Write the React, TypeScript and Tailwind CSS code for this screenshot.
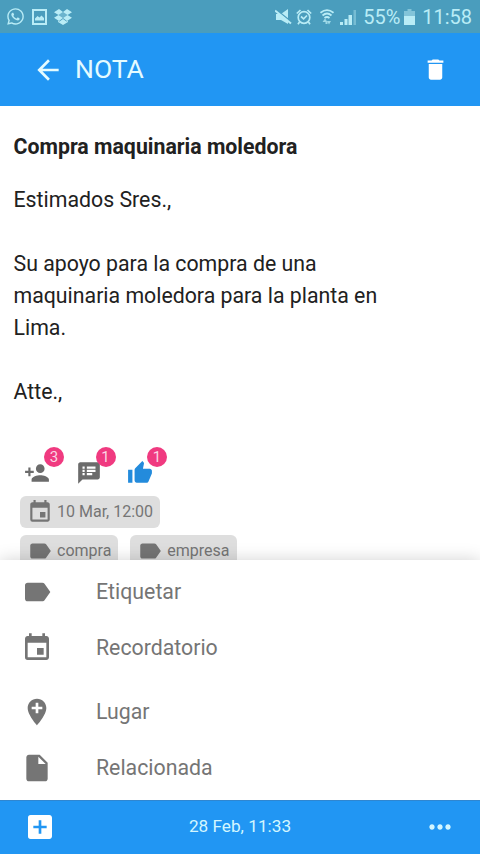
import type { ReactNode } from "react";
import type { IconType } from "react-icons";
import { FaWhatsapp } from "react-icons/fa";
import {
   MdAddBox,
   MdAddLocation,
   MdArrowBack,
   MdDelete,
   MdEvent,
   MdInsertDriveFile,
   MdLabel,
   MdMoreHoriz,
   MdPersonAdd,
   MdSpeakerNotes,
   MdThumbUp,
} from "react-icons/md";

function StatusBar()
{
   return (
      <div className="flex h-[33px] shrink-0 items-center bg-[#4a9dbd] pl-[6px] pr-2 text-[#b9ecf6]">
         <FaWhatsapp className="size-[19px]" />
         <svg className="ml-[7px] h-4 w-[15px]" viewBox="0 0 15 16" fill="none" stroke="currentColor" strokeWidth="2">
            <rect x="1" y="1" width="13" height="14" />
            <path d="M3 11.500V9.500L5.500 7L7.500 8.500L9.500 6.500L12 9V11.500Z" fill="currentColor" stroke="none" />
         </svg>
         {/* dropbox */}
         <svg className="ml-[7px] h-4 w-[18px]" viewBox="0 0 18 16" fill="currentColor">
            <path d="M5 0L9 3L4.500 6L0 3.200ZM13 0L18 3.200L13.500 6L9 3ZM0 8.800L4.500 6L9 9L5 12ZM18 8.800L13.500 6L9 9L13 12Z" />
            <path d="M4 12L5.500 12.600L9 10L12.500 12.600L14 12V13L9 16L4 13Z" />
            <path d="M4.500 6L9 3L13.500 6L9 9Z" opacity=".3" />
         </svg>
         <div className="ml-auto flex items-center">
            {/* muted speaker */}
            <svg className="h-4 w-[17px]" viewBox="0 0 17 16" fill="currentColor">
               <path d="M1 5H6L13 0V15L6 11H1Z" />
               <path d="M1 0.500L16 12.500" stroke="#4a9dbd" strokeWidth="1.5" />
               <path d="M0 1.500L16 14.500" stroke="currentColor" strokeWidth="2" />
            </svg>
            <svg className="ml-1 h-4 w-4" viewBox="0 0 16 16" fill="none" stroke="currentColor" strokeWidth="1.7">
               <circle cx="8" cy="8.5" r="5.8" />
               <path d="M5 7.500L7.600 9.800L11 6.500M0.800 4.500L4.500 1M15.200 4.500L11.500 1M3.500 13L2 15.200M12.500 13L14 15.200" />
            </svg>
            <svg className="ml-2 h-4 w-[14px]" viewBox="0 0 14 16" fill="none" stroke="currentColor" strokeWidth="1.7">
               <path d="M0.500 3.800Q7 -1.500 13.500 3.800M2.500 6.500Q7 2.500 11.500 6.500M4.500 9Q7 7 9.500 9" />
               <path d="M2.500 13L5 9.500L7.500 13V15H5.500V13ZM7 12H11L9 15.500Z" fill="currentColor" stroke="none" opacity=".75" />
            </svg>
            <svg className="ml-[6px] h-4 w-4" viewBox="0 0 16 16" fill="currentColor">
               <path d="M0 13H3V16H0ZM4.500 10H7.500V16H4.500ZM8.500 6H12V16H8.500Z" />
               <path d="M13.500 1H16V16H13.500Z" opacity=".4" />
            </svg>
            <span className="ml-[7px] w-[38px] text-[20px] leading-none">55%</span>
            <svg className="ml-[3px] h-4 w-[11px]" viewBox="0 0 11 16" fill="currentColor">
               <path d="M3.500 0H7.500V2H11V8H0V2H3.500Z" opacity=".5" />
               <path d="M0 7H11V16H0Z" />
            </svg>
            <span className="ml-[7px] text-[20px] leading-none">11:58</span>
         </div>
      </div>
   );
}

function Badged({ icon: Icon, count, color }: { icon: IconType; count: number; color: string })
{
   return (
      <div className="relative flex w-[51.5px]">
         <Icon className={`size-[26px] ${color}`} />
         <span className="absolute -top-[13px] left-5 flex size-5 items-center justify-center rounded-full bg-[#f03a80] text-[15px] leading-none text-[#fbd5e4]">
            {count}
         </span>
      </div>
   );
}

function Chip({ icon: Icon, children }: { icon: IconType; children: ReactNode })
{
   return (
      <span className="flex h-8 items-center gap-1 rounded-md bg-[#dedede] pl-[7px] pr-[7px] text-[16px] text-[#757575]">
         <Icon className="size-[26px]" />
         {children}
      </span>
   );
}

function MenuItem({ icon: Icon, label }: { icon: IconType; label: string })
{
   return (
      <li className="flex h-14 items-center gap-[43px] pl-[21px] text-[21.300px]">
         <Icon className="size-8" />
         {label}
      </li>
   );
}

export default function App()
{
   return (
      <div className="flex h-[854px] w-[480px] flex-col overflow-hidden bg-white font-[Roboto,sans-serif]">
         <StatusBar />
         <header className="flex h-[73px] shrink-0 items-center bg-[#2196f3] pl-8 pr-[31px] text-[#e4fbff]">
            <MdArrowBack className="size-8" />
            <h1 className="ml-[11px] text-[26.500px] leading-none">NOTA</h1>
            <MdDelete className="ml-auto size-[27px] text-white" />
         </header>

         <main className="h-[454px] shrink-0 overflow-hidden pt-[25px] text-[#212121]">
            <h2 className="pl-[13.5px] text-[21.300px] font-bold leading-8">Compra maquinaria moledora</h2>
            <div className="mt-[21px] w-[400px] pl-[13.5px] text-[21.300px] leading-8">
               <p>Estimados Sres.,</p>
               <p className="mt-8">Su apoyo para la compra de una maquinaria moledora para la planta en Lima.</p>
               <p className="mt-8">Atte.,</p>
            </div>
            <div className="mt-[52px] flex pl-6">
               <Badged icon={MdPersonAdd} count={3} color="text-[#6b6b6b]" />
               <Badged icon={MdSpeakerNotes} count={1} color="text-[#6b6b6b]" />
               <Badged icon={MdThumbUp} count={1} color="text-[#238bdc]" />
            </div>
            <div className="mt-[10px] flex pl-5">
               <Chip icon={MdEvent}>10 Mar, 12:00</Chip>
            </div>
            <div className="mt-[7px] flex gap-3 pl-5">
               <Chip icon={MdLabel}>compra</Chip>
               <Chip icon={MdLabel}>empresa</Chip>
            </div>
         </main>

         <ul className="relative h-60 shrink-0 bg-white pt-1 text-[#757575] shadow-[0_0_16px_rgba(0,0,0,0.18)]">
            <MenuItem icon={MdLabel} label="Etiquetar" />
            <MenuItem icon={MdEvent} label="Recordatorio" />
            <li className="h-2" />
            <MenuItem icon={MdAddLocation} label="Lugar" />
            <MenuItem icon={MdInsertDriveFile} label="Relacionada" />
         </ul>

         <footer className="relative flex flex-1 items-center justify-between border-t border-[#2f86d0] bg-[#2196f3] px-6 pb-px text-[17.200px] text-[#d3f6ff]">
            <MdAddBox className="size-8 text-white" />
            <span>28 Feb, 11:33</span>
            <MdMoreHoriz className="size-8" />
         </footer>
      </div>
   );
}
